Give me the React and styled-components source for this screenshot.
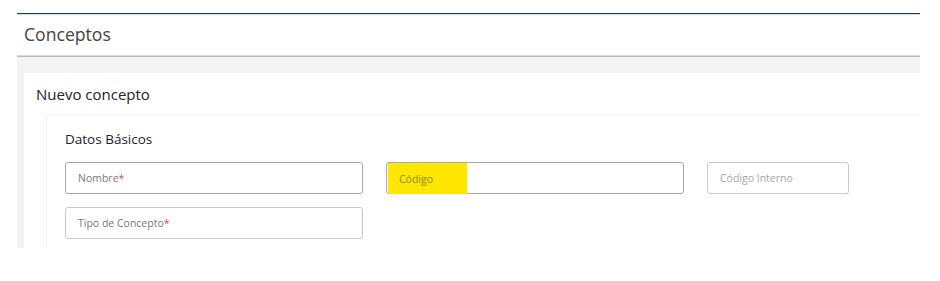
import React from 'react';
import styled, { createGlobalStyle } from 'styled-components';

const GlobalStyle = createGlobalStyle`
  body {
    margin: 0;
    background: #fff;
    font-family: "Open Sans", "Liberation Sans", sans-serif;
  }
`;

const Page = styled.div`
  padding: 13px 20px 0 17px;
`;

const Panel = styled.section`
  border-top: 1px solid #17395c;
  box-shadow: inset 0 1px 0 #d4e4f4;
`;

const Header = styled.header`
  height: 42px;
  padding: 8px 0 0 7px;
  box-sizing: border-box;
  border-bottom: 1px solid #dcdcdc;
  box-shadow: 0 1px 0 #b9b9b9;

  h1 {
    margin: 0;
    font-size: 17.6px;
    line-height: 24px;
    font-weight: 400;
    color: #444;
  }
`;

const Body = styled.div`
  margin-top: 1px;
  background: #f4f4f4;
  padding: 16px 0 0 7px;
`;

const Card = styled.div`
  background: #fff;
  padding: 10px 0 0 12px;

  h2 {
    margin: 0 0 10px;
    font-size: 15px;
    line-height: 22px;
    font-weight: 400;
    color: #222;
  }
`;

const InnerCard = styled.div`
  margin-left: 10px;
  border-left: 1px solid #efefef;
  border-top: 1px solid #f3f3f3;
  padding: 14px 0 9px 18px;

  h3 {
    margin: 0 0 13px;
    font-size: 13.5px;
    line-height: 19px;
    font-weight: 400;
    color: #222;
  }
`;

const Grid = styled.div`
  display: grid;
  grid-template-columns: 298px 298px 142px;
  column-gap: 23px;
  row-gap: 13px;
`;

const Field = styled.div`
  position: relative;
  height: 32px;
  box-sizing: border-box;
  border: 1px solid ${({ $strong }) => ($strong ? '#a8a8a8' : '#c9c9c9')};
  border-radius: 3px;
  display: flex;
  align-items: center;
  padding-left: 12px;
  font-size: 10.5px;
  color: ${({ $muted }) => ($muted ? '#a6a6a6' : '#777')};
`;

const Required = styled.span`
  color: #e0474c;
`;

const Highlight = styled.span`
  position: absolute;
  left: 1px;
  top: 0;
  width: 79px;
  height: 31px;
  background: #ffe600;
  display: flex;
  align-items: center;
  padding-left: 11px;
  box-sizing: border-box;
  color: #8a8a14;
`;

export default function App() {
  return (
    <Page>
      <GlobalStyle />
      <Panel>
        <Header>
          <h1>Conceptos</h1>
        </Header>
        <Body>
          <Card>
            <h2>Nuevo concepto</h2>
            <InnerCard>
              <h3>Datos Básicos</h3>
              <Grid>
                <Field $strong>
                  Nombre<Required>*</Required>
                </Field>
                <Field $strong>
                  <Highlight>Código</Highlight>
                </Field>
                <Field $muted>Código Interno</Field>
                <Field>
                  Tipo de Concepto<Required>*</Required>
                </Field>
              </Grid>
            </InnerCard>
          </Card>
        </Body>
      </Panel>
    </Page>
  );
}
